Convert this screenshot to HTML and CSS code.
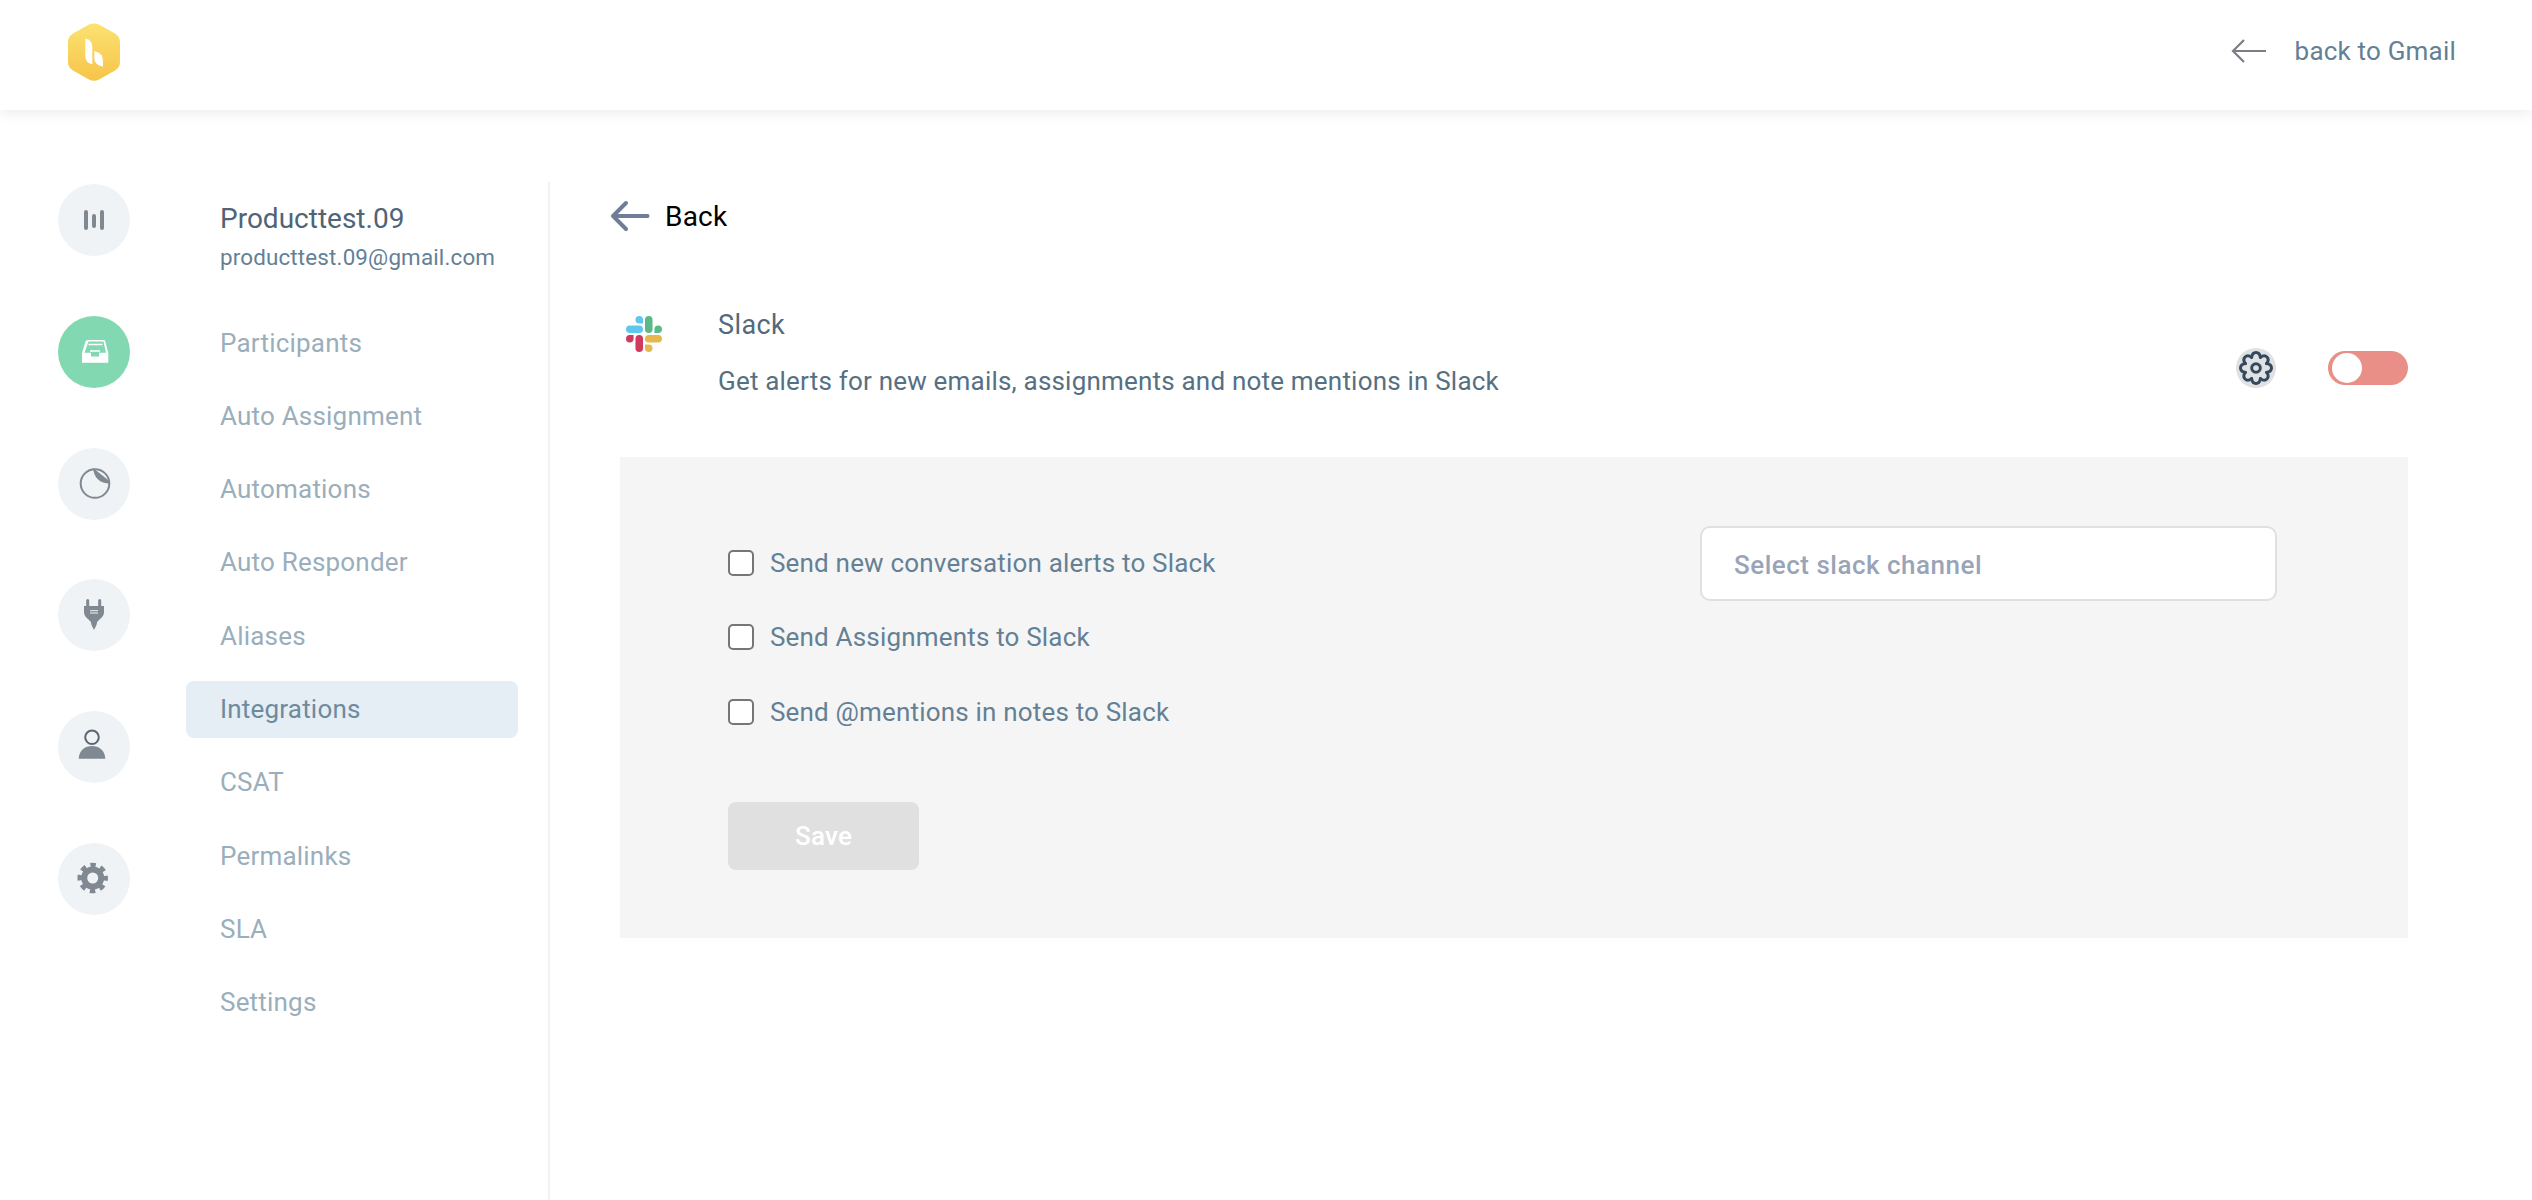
FILE: index.html
```html
<!DOCTYPE html>
<html lang="en">
<head>
<meta charset="utf-8">
<title>Integrations - Slack</title>
<link rel="stylesheet" href="styles.css">
</head>
<body>
<header class="topbar">
  <svg class="logo" viewBox="0 0 54 58" aria-hidden="true">
    <defs><linearGradient id="hex" x1="0" y1="0" x2="0" y2="1"><stop offset="0" stop-color="#fbe271"/><stop offset="1" stop-color="#f7c449"/></linearGradient></defs>
    <path d="M22 1.500 Q27 -0.700 32 1.500 L48 10.500 Q53 13.500 53 19 V39 Q53 44.500 48 47.500 L32 56.500 Q27 59 22 56.500 L6 47.500 Q1 44.500 1 39 V19 Q1 13.500 6 10.500 Z" fill="url(#hex)"/>
    <path d="M18.300 15.500 Q25.300 17 25.300 24 V41.300 Q18.300 40 18.300 33 Z" fill="#fff"/>
    <path d="M27.300 28 Q36 30 36 38 V43.700 Q27.300 42 27.300 35 Z" fill="#fff"/>
  </svg>
  <a class="gmail-link">
    <svg class="gmail-arrow" viewBox="0 0 36 26" aria-hidden="true"><path d="M35 13H2M13 2 2 13l11 11" fill="none" stroke="#7b7f85" stroke-width="2.200"/></svg>
    <span>back to Gmail</span>
  </a>
</header>
<div class="layout">
  <aside class="rail">
    <div class="rail-btn"><svg viewBox="0 0 72 72" aria-hidden="true"><rect x="26" y="26" width="4" height="20" rx="2"/><rect x="34" y="30" width="4" height="14" rx="2"/><rect x="42" y="26" width="4" height="20" rx="2"/></svg></div>
    <div class="rail-btn rail-btn-on"><svg viewBox="0 0 72 72" aria-hidden="true">
      <path d="M30 24H46Q47 24 47.300 25.500L50.300 37V46.700H24V37L27.500 25.500Q28 24 30 24Z" fill="#fff"/>
      <path d="M30.500 25.500H45.500L48 36.800H41V40.500H33V36.800H26.500Z" fill="#82d9b1"/>
      <path d="M30.500 28.500H44.500M32 35H42" stroke="#fff" stroke-width="1.500"/>
    </svg></div>
    <div class="rail-btn"><svg viewBox="0 0 72 72" aria-hidden="true">
      <circle cx="37" cy="35.500" r="14.300" fill="none" stroke="#808891" stroke-width="2"/>
      <path d="M35 20 L52 33.500 Q52.500 36 50 35.500 C42 35 36 30 35 20Z"/>
    </svg></div>
    <div class="rail-btn"><svg viewBox="0 0 72 72" aria-hidden="true">
      <path d="M29.700 28V21.500M41.700 28V21.500" stroke="#808891" stroke-width="3" stroke-linecap="round" fill="none"/>
      <path d="M26 27H46V33Q46 37 42 40Q39 42 38.500 46L36 51L33.500 46Q33 42 30 40Q26 37 26 33Z"/>
      <path d="M32 31.700H40M32 34H40" stroke="#eff3f6" stroke-width="1"/>
    </svg></div>
    <div class="rail-btn"><svg viewBox="0 0 72 72" aria-hidden="true">
      <circle cx="34" cy="26.300" r="6.800" fill="none" stroke="#5b6672" stroke-width="2"/>
      <path d="M20.700 47.700C21 39.500 27 35 34 35S47 39.500 47.300 47.700Z"/>
    </svg></div>
    <div class="rail-btn"><svg viewBox="0 0 72 72" aria-hidden="true">
      <circle cx="34.700" cy="35" r="8.500" fill="none" stroke="#808891" stroke-width="6"/>
      <circle cx="34.700" cy="35" r="13" fill="none" stroke="#808891" stroke-width="4.500" stroke-dasharray="5.400 4.810" stroke-dashoffset="2.700"/>
    </svg></div>
  </aside>
  <nav class="sidenav">
    <div class="profile">
      <div class="profile-name">Producttest.09</div>
      <div class="profile-mail">producttest.09@gmail.com</div>
    </div>
    <ul class="nav-list">
      <li class="nav-item">Participants</li>
      <li class="nav-item">Auto Assignment</li>
      <li class="nav-item">Automations</li>
      <li class="nav-item">Auto Responder</li>
      <li class="nav-item">Aliases</li>
      <li class="nav-item nav-item-on">Integrations</li>
      <li class="nav-item">CSAT</li>
      <li class="nav-item">Permalinks</li>
      <li class="nav-item">SLA</li>
      <li class="nav-item">Settings</li>
    </ul>
  </nav>
  <main class="content">
    <a class="back-row">
      <svg class="back-arrow" viewBox="0 0 40 32" aria-hidden="true"><path d="M37.500 16H3M16 3 3 16l13 13" fill="none" stroke="#6f7d98" stroke-width="4" stroke-linecap="round" stroke-linejoin="round"/></svg>
      <span>Back</span>
    </a>
    <section class="app-row">
      <svg class="slack-logo" viewBox="0 0 24 24" aria-hidden="true">
        <path fill="#cf3a5e" d="M5.042 15.165a2.528 2.528 0 0 1-2.52 2.523A2.528 2.528 0 0 1 0 15.165a2.527 2.527 0 0 1 2.522-2.52h2.52v2.52zM6.313 15.165a2.527 2.527 0 0 1 2.521-2.52 2.527 2.527 0 0 1 2.521 2.52v6.313A2.528 2.528 0 0 1 8.834 24a2.528 2.528 0 0 1-2.521-2.522v-6.313z"/>
        <path fill="#5fc6ee" d="M8.834 5.042a2.528 2.528 0 0 1-2.521-2.52A2.528 2.528 0 0 1 8.834 0a2.528 2.528 0 0 1 2.521 2.522v2.52H8.834zM8.834 6.313a2.528 2.528 0 0 1 2.521 2.521 2.528 2.528 0 0 1-2.521 2.521H2.522A2.528 2.528 0 0 1 0 8.834a2.528 2.528 0 0 1 2.522-2.521h6.312z"/>
        <path fill="#5ab987" d="M18.956 8.834a2.528 2.528 0 0 1 2.522-2.521A2.528 2.528 0 0 1 24 8.834a2.528 2.528 0 0 1-2.522 2.521h-2.522V8.834zM17.688 8.834a2.528 2.528 0 0 1-2.523 2.521 2.527 2.527 0 0 1-2.52-2.521V2.522A2.527 2.527 0 0 1 15.165 0a2.528 2.528 0 0 1 2.523 2.522v6.312z"/>
        <path fill="#e6b74f" d="M15.165 18.956a2.528 2.528 0 0 1 2.523 2.522A2.528 2.528 0 0 1 15.165 24a2.527 2.527 0 0 1-2.52-2.522v-2.522h2.52zM15.165 17.688a2.527 2.527 0 0 1-2.52-2.523 2.526 2.526 0 0 1 2.52-2.52h6.313A2.527 2.527 0 0 1 24 15.165a2.528 2.528 0 0 1-2.522 2.523h-6.313z"/>
      </svg>
      <div class="app-text">
        <div class="app-title">Slack</div>
        <div class="app-desc">Get alerts for new emails, assignments and note mentions in Slack</div>
      </div>
      <div class="app-actions">
        <svg class="cog" viewBox="-20 -20 40 40" aria-hidden="true">
          <defs><path id="lobe" d="M-4.400-10.600C-3.500-17.100 3.500-17.100 4.400-10.600"/></defs>
          <circle r="20" fill="#e0e1e3"/>
          <g fill="none" stroke="#34495f" stroke-width="3" stroke-linecap="round">
            <use href="#lobe"/><use href="#lobe" transform="rotate(45)"/><use href="#lobe" transform="rotate(90)"/><use href="#lobe" transform="rotate(135)"/><use href="#lobe" transform="rotate(180)"/><use href="#lobe" transform="rotate(225)"/><use href="#lobe" transform="rotate(270)"/><use href="#lobe" transform="rotate(315)"/>
            <circle r="4.300"/>
          </g>
        </svg>
        <span class="toggle"><span class="toggle-knob"></span></span>
      </div>
    </section>
    <form class="panel">
      <div class="panel-top">
        <div class="checks">
          <label class="check"><input type="checkbox"><span>Send new conversation alerts to Slack</span></label>
          <label class="check"><input type="checkbox"><span>Send Assignments to Slack</span></label>
          <label class="check"><input type="checkbox"><span>Send @mentions in notes to Slack</span></label>
        </div>
        <div class="channel">Select slack channel</div>
      </div>
      <button class="save" type="button">Save</button>
    </form>
  </main>
</div>
</body>
</html>
```
FILE: styles.css
```css
* { box-sizing: border-box; }
html, body { margin: 0; height: 100%; }
body { background: #fff; font-family: Roboto, "Liberation Sans", sans-serif; overflow: hidden; }

.topbar {
  position: relative;
  height: 110px;
  display: flex;
  align-items: center;
  justify-content: space-between;
  padding: 0 76px 8px 67px;
  background: #fff;
  box-shadow: 0 2px 14px rgba(0, 0, 0, .09);
}
.logo { width: 54px; height: 58px; margin-top: 1px; }
.gmail-link { display: flex; align-items: center; gap: 27.500px; margin-right: 0; color: #648095; font-size: 26px; letter-spacing: .2px; }
.gmail-arrow { width: 36px; height: 26px; }

.layout { display: flex; height: 1018px; margin-top: 72px; }

.rail { width: 186px; padding: 2px 0 0 58px; display: flex; flex-direction: column; gap: 59.800px; }
.rail-btn { width: 72px; height: 72px; border-radius: 50%; background: #eff3f6; }
.rail-btn svg { display: block; width: 72px; height: 72px; fill: #808891; }
.rail-btn-on { background: #82d9b1; }

.sidenav { width: 364px; padding-right: 30px; border-right: 2px solid #f2f2f3; }
.profile { padding: 19px 0 0 34px; height: 132.500px; }
.profile-name { font-size: 28px; line-height: 36px; color: #4f6475; }
.profile-mail { font-size: 22.400px; line-height: 30px; margin-top: 5px; letter-spacing: .16px; color: #648095; }
.nav-list { list-style: none; margin: 0; padding: 0; display: flex; flex-direction: column; gap: 16.300px; }
.nav-item { height: 57px; line-height: 57px; padding-left: 34px; border-radius: 8px; font-size: 26px; letter-spacing: .2px; color: #9aaebb; }
.nav-item-on { background: #e5eef4; color: #6e8a9e; }

.content { flex: 1; padding: 0 124px 0 70px; }
.back-row { display: flex; align-items: center; gap: 15.500px; height: 68px; margin-left: -10.500px; color: #000; font-size: 28px; letter-spacing: .2px; }
.back-arrow { width: 40px; height: 32px; }

.app-row { display: flex; align-items: flex-start; height: 207px; padding: 50px 0 0 6px; }
.slack-logo { width: 36px; height: 36px; margin-top: 16px; flex: none; }
.app-text { flex: 1; padding-left: 56px; }
.app-title { font-size: 27px; line-height: 34px; margin-top: 8px; letter-spacing: .4px; color: #526a7b; }
.app-desc { font-size: 26px; line-height: 34px; margin-top: 22px; letter-spacing: .2px; color: #567083; }
.app-actions { display: flex; align-items: center; gap: 52px; margin-top: 48px; }
.cog { width: 40px; height: 40px; display: block; }
.toggle { display: block; width: 80px; height: 34px; border-radius: 17px; background: #e98f87; padding: 2px 4px; }
.toggle-knob { display: block; width: 30px; height: 30px; border-radius: 50%; background: #fff; }

.panel { height: 481px; background: #f5f5f5; padding: 69px 131px 0 108px; }
.panel-top { display: flex; justify-content: space-between; align-items: flex-start; height: 276px; }
.checks { display: flex; flex-direction: column; gap: 24.700px; padding-top: 11.500px; }
.check { display: flex; align-items: center; gap: 16px; height: 50px; font-size: 26px; letter-spacing: .18px; color: #648095; }
.check input { appearance: none; width: 26px; height: 26px; margin: 0; border: 2px solid #767676; border-radius: 5px; background: #fff; }
.channel { width: 577px; height: 75px; line-height: 74px; padding-left: 32px; border: 2px solid #e0e0e0; border-radius: 10px; background: #fff; font-size: 26px; font-weight: 500; letter-spacing: .5px; color: #9aa4b8; }
.save { display: block; width: 191px; height: 68px; border: 0; border-radius: 8px; background: #e0e0e0; color: #fff; font-family: inherit; font-size: 26px; font-weight: 500; letter-spacing: .2px; }
```
